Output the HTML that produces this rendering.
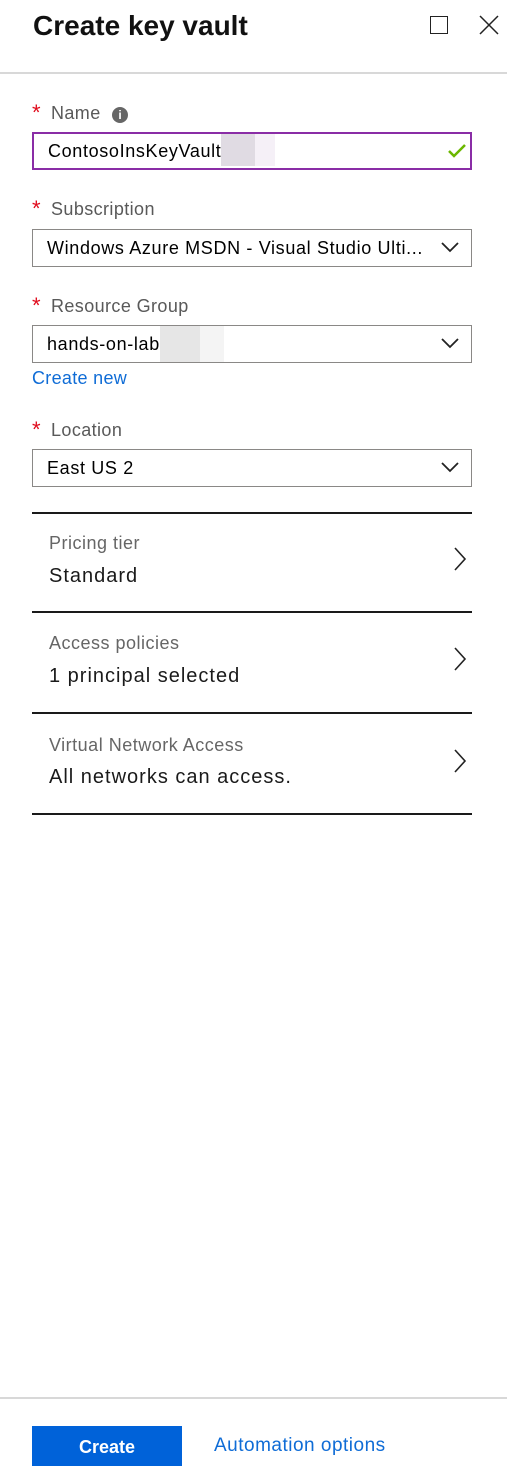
<!DOCTYPE html>
<html><head><style>
*{box-sizing:border-box;margin:0;padding:0}
body{width:507px;height:1461px;background:#fff;font-family:"Segoe UI","Liberation Sans",sans-serif;color:#000;position:relative;overflow:hidden}
.a{position:absolute;white-space:nowrap}
.lbl{font-size:18px;color:#595959;letter-spacing:0.4px;position:absolute;left:19px;top:1px;white-space:nowrap}
.star{color:#e00b1c;font-size:22px;position:absolute;left:0;top:-2px}
.inp{position:absolute;left:32px;width:440px;border:1px solid #8a8886;font-size:18px;letter-spacing:0.65px;padding-left:14px;color:#000;background:#fff;white-space:nowrap}
.chev{position:absolute;right:12px;top:50%;margin-top:-7px}
.line{position:absolute;left:32px;width:440px;height:2px;background:#1a1a1a}
.sub{font-size:18px;color:#666;letter-spacing:0.5px}
.val{font-size:20px;color:#1a1a1a;letter-spacing:1px}
</style></head><body>
<div class="a" style="left:33px;top:10px;font-size:28px;font-weight:600;color:#111">Create key vault</div>
<div class="a" style="left:430px;top:16px;width:18px;height:18px;border:1.5px solid #222"></div>
<svg class="a" style="left:478px;top:14px" width="22" height="22"><path d="M2 2L20 20M20 2L2 20" stroke="#222" stroke-width="1.5"/></svg>
<div class="a" style="left:0;top:72px;width:507px;height:2px;background:#d8d8d8"></div>

<div class="a" style="left:32px;top:102px"><span class="star">*</span><span class="lbl">Name</span></div>
<div class="a" style="left:112px;top:107px;width:16px;height:16px;border-radius:50%;background:#666;color:#fff;font-size:12px;font-weight:bold;text-align:center;line-height:16px">i</div>
<div class="inp" style="top:132px;height:38px;line-height:34px;border:2px solid #8a2da6">ContosoInsKeyVault<span style="display:inline-block;width:34px;height:32px;background:#e0dbe3;vertical-align:top"></span><span style="display:inline-block;width:20px;height:32px;background:#f5f0f7;vertical-align:top"></span>
<svg class="a" style="right:4px;top:10px" width="18" height="14"><path d="M1 7L6 12L17 1" stroke="#6bb700" stroke-width="2.5" fill="none"/></svg></div>

<div class="a" style="left:32px;top:198px"><span class="star">*</span><span class="lbl">Subscription</span></div>
<div class="inp" style="top:229px;height:38px;line-height:36px">Windows Azure MSDN - Visual Studio Ulti...<svg class="chev" width="18" height="12"><path d="M1 2L9 10L17 2" stroke="#222" stroke-width="1.8" fill="none"/></svg></div>

<div class="a" style="left:32px;top:295px"><span class="star">*</span><span class="lbl">Resource Group</span></div>
<div class="inp" style="top:325px;height:38px;line-height:36px">hands-on-lab<span style="display:inline-block;width:40px;height:36px;background:#e6e6e6;vertical-align:top"></span><span style="display:inline-block;width:24px;height:36px;background:#f4f4f4;vertical-align:top"></span><svg class="chev" width="18" height="12"><path d="M1 2L9 10L17 2" stroke="#222" stroke-width="1.8" fill="none"/></svg></div>
<div class="a" style="left:32px;top:368px;font-size:18px;letter-spacing:0.3px;color:#0f6cd6">Create new</div>

<div class="a" style="left:32px;top:419px"><span class="star">*</span><span class="lbl">Location</span></div>
<div class="inp" style="top:449px;height:38px;line-height:36px">East US 2<svg class="chev" width="18" height="12"><path d="M1 2L9 10L17 2" stroke="#222" stroke-width="1.8" fill="none"/></svg></div>

<div class="line" style="top:512px"></div>
<div class="a sub" style="left:49px;top:533px">Pricing tier</div>
<div class="a val" style="left:49px;top:565px">Standard</div>
<svg class="a" style="left:453px;top:546px" width="14" height="26"><path d="M2 2L12 13L2 24" stroke="#222" stroke-width="1.6" fill="none"/></svg>
<div class="line" style="top:611px"></div>
<div class="a sub" style="left:49px;top:633px">Access policies</div>
<div class="a val" style="left:49px;top:665px">1 principal selected</div>
<svg class="a" style="left:453px;top:646px" width="14" height="26"><path d="M2 2L12 13L2 24" stroke="#222" stroke-width="1.6" fill="none"/></svg>
<div class="line" style="top:712px"></div>
<div class="a sub" style="left:49px;top:735px">Virtual Network Access</div>
<div class="a val" style="left:49px;top:766px">All networks can access.</div>
<svg class="a" style="left:453px;top:748px" width="14" height="26"><path d="M2 2L12 13L2 24" stroke="#222" stroke-width="1.6" fill="none"/></svg>
<div class="line" style="top:813px"></div>

<div class="a" style="left:0;top:1397px;width:507px;height:2px;background:#d8d8d8"></div>
<div class="a" style="left:32px;top:1426px;width:150px;height:40px;background:#0062d9;color:#fff;font-size:18px;font-weight:bold;text-align:center;line-height:42px">Create</div>
<div class="a" style="left:214px;top:1435px;font-size:19px;letter-spacing:0.5px;color:#0f6cd6">Automation options</div>
</body></html>
